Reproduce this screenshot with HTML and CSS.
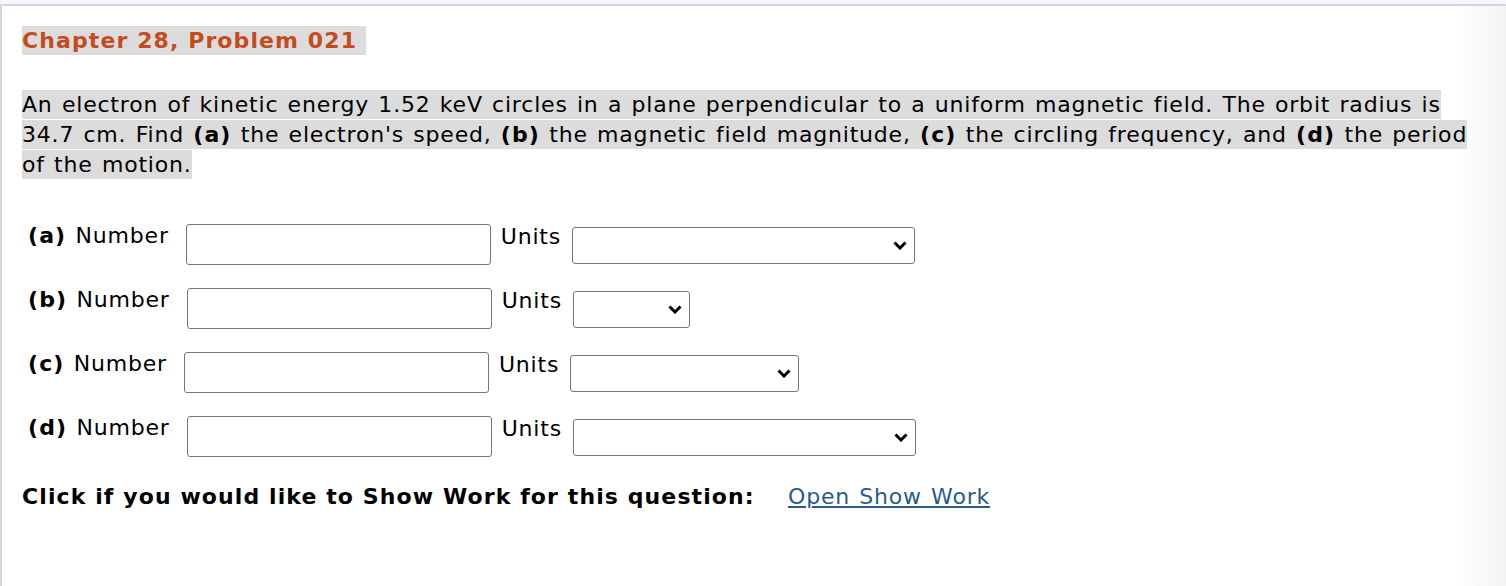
FILE: index.html
```html
<!DOCTYPE html>
<html lang="en">
<head>
    <meta charset="UTF-8">
    <title>Chapter 28, Problem 021</title>
    <link rel="stylesheet" href="styles.css">
</head>
<body>
    <div class="page">
        <h1 class="title"><span class="hl">Chapter 28, Problem 021&nbsp;</span></h1>

        <p class="question"><span class="hl">An electron of kinetic energy 1.52 keV circles in a plane perpendicular to a uniform magnetic field. The orbit radius is 34.7 cm. Find <b>(a)</b> the electron's speed, <b>(b)</b> the magnetic field magnitude, <b>(c)</b> the circling frequency, and <b>(d)</b> the period of the motion.</span></p>

        <div class="answers">
            <div class="answer-row">
                <span class="label"><b>(a)</b> Number</span>
                <input type="text" class="num">
                <span class="units">Units</span>
                <div class="select wide">
                    <svg width="14" height="9" viewBox="0 0 14 9"><path d="M1.5 1.5 L7 7 L12.5 1.5" fill="none" stroke="#000" stroke-width="3"/></svg>
                </div>
            </div>
            <div class="answer-row">
                <span class="label"><b>(b)</b> Number</span>
                <input type="text" class="num">
                <span class="units">Units</span>
                <div class="select narrow">
                    <svg width="14" height="9" viewBox="0 0 14 9"><path d="M1.5 1.5 L7 7 L12.5 1.5" fill="none" stroke="#000" stroke-width="3"/></svg>
                </div>
            </div>
            <div class="answer-row">
                <span class="label"><b>(c)</b> Number</span>
                <input type="text" class="num">
                <span class="units">Units</span>
                <div class="select mid">
                    <svg width="14" height="9" viewBox="0 0 14 9"><path d="M1.5 1.5 L7 7 L12.5 1.5" fill="none" stroke="#000" stroke-width="3"/></svg>
                </div>
            </div>
            <div class="answer-row">
                <span class="label"><b>(d)</b> Number</span>
                <input type="text" class="num">
                <span class="units">Units</span>
                <div class="select wide">
                    <svg width="14" height="9" viewBox="0 0 14 9"><path d="M1.5 1.5 L7 7 L12.5 1.5" fill="none" stroke="#000" stroke-width="3"/></svg>
                </div>
            </div>
        </div>

        <p class="show-work">
            <b>Click if you would like to Show Work for this question:</b>
            <a href="#">Open Show Work</a>
        </p>
    </div>
</body>
</html>
```

FILE: styles.css
```css
body {
    margin: 0;
    background-color: #f4f6f9;
    font-family: "DejaVu Sans", Verdana, sans-serif;
    font-size: 22px;
    letter-spacing: 0.8px;
    word-spacing: 1.5px;
    color: #000;
}
b {
    letter-spacing: 1.1px;
    word-spacing: 0;
}
.page {
    margin-top: 4px;
    min-height: 580px;
    padding: 20px 0 0 20px;
    border-top: 2px solid #cfd6df;
    border-left: 2px solid #cfd6df;
    background: linear-gradient(to right, #fff 96.6%, #f3f3f3);
}
.hl {
    background-color: #dcdcdc;
    padding: 2px 0;
}
.title {
    margin: 0;
    font-size: 22px;
    letter-spacing: 1.1px;
    word-spacing: 0;
    line-height: 30px;
    color: #c54b1e;
}
.question {
    margin: 34px 0 0 0;
    line-height: 30px;
    max-width: 1474px;
}
.answers {
    margin-top: 44px;
    padding-left: 6px;
}
.answer-row {
    display: flex;
    align-items: flex-start;
    height: 64px;
}
.label {
    line-height: 24px;
}
.num {
    width: 305px;
    height: 41px;
    margin: 0 0 0 17px;
    padding: 0;
    box-sizing: border-box;
    border: 1px solid #777;
    border-radius: 3px;
}
.units {
    margin: 1px 0 0 10px;
    line-height: 24px;
}
.select {
    display: flex;
    align-items: center;
    justify-content: flex-end;
    box-sizing: border-box;
    height: 37px;
    margin: 3px 0 0 11px;
    padding-right: 7px;
    border: 1px solid #777;
    border-radius: 3px;
    background: #fff;
}
.wide {
    width: 343px;
}
.narrow {
    width: 117px;
}
.mid {
    width: 229px;
}
.show-work {
    margin: 4px 0 0 0;
}
.show-work a {
    margin-left: 24px;
    color: #2c5a8c;
}
```
